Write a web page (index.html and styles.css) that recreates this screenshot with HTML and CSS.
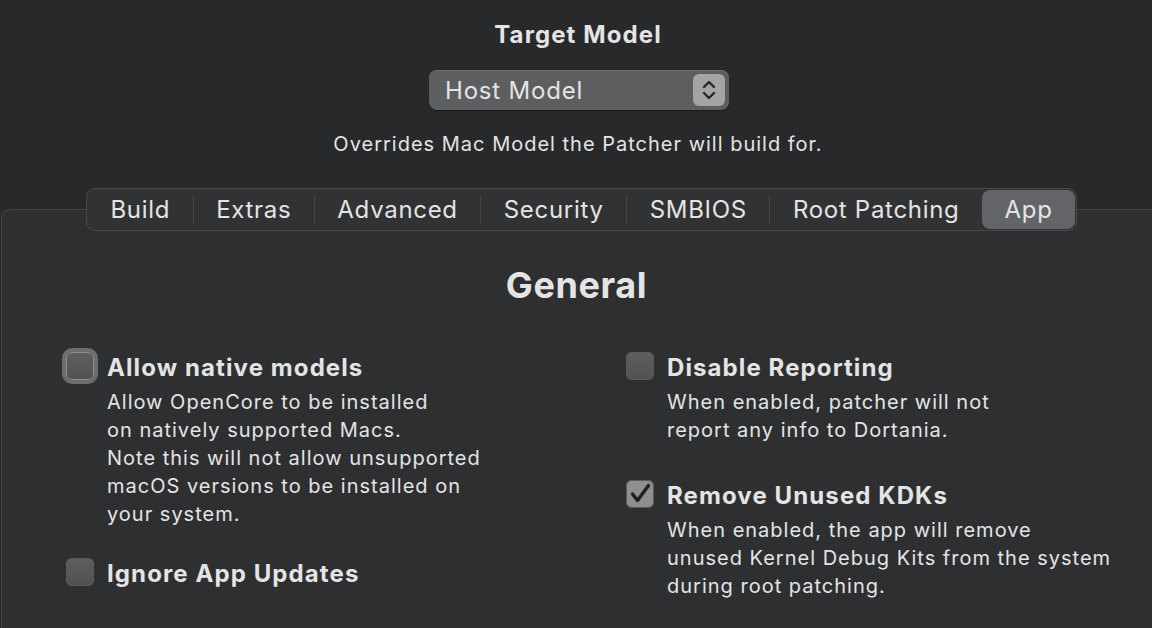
FILE: index.html
```html
<!DOCTYPE html>
<html lang="en">
<head>
    <meta charset="UTF-8">
    <meta name="viewport" content="width=device-width, initial-scale=1.0">
    <title>OpenCore Legacy Patcher Settings</title>
    <link rel="stylesheet" href="styles.css">
</head>
<body>
    <div class="header">
        <h1>Target Model</h1>
        <div class="popup">
            <span>Host Model</span>
            <span class="stepper">
                <svg width="16" height="24" viewBox="0 0 16 24">
                    <path d="M3 9 L8 4 L13 9" fill="none" stroke="#262626" stroke-width="2.4" stroke-linecap="round" stroke-linejoin="round"/>
                    <path d="M3 15 L8 20 L13 15" fill="none" stroke="#262626" stroke-width="2.4" stroke-linecap="round" stroke-linejoin="round"/>
                </svg>
            </span>
        </div>
        <p class="hint">Overrides Mac Model the Patcher will build for.</p>
    </div>

    <div class="panel">
        <div class="tabs">
            <span class="tab">Build</span>
            <span class="tab">Extras</span>
            <span class="tab">Advanced</span>
            <span class="tab">Security</span>
            <span class="tab">SMBIOS</span>
            <span class="tab">Root Patching</span>
            <span class="tab active">App</span>
        </div>

        <h2>General</h2>

        <div class="columns">
            <div class="col col-left">
                <div class="option">
                    <span class="box focused"></span>
                    <div>
                        <div class="label">Allow native models</div>
                        <p class="desc">Allow OpenCore to be installed<br>on natively supported Macs.<br>Note this will not allow unsupported<br>macOS versions to be installed on<br>your system.</p>
                    </div>
                </div>
                <div class="option">
                    <span class="box"></span>
                    <div>
                        <div class="label">Ignore App Updates</div>
                    </div>
                </div>
            </div>
            <div class="col col-right">
                <div class="option">
                    <span class="box"></span>
                    <div>
                        <div class="label">Disable Reporting</div>
                        <p class="desc">When enabled, patcher will not<br>report any info to Dortania.</p>
                    </div>
                </div>
                <div class="option">
                    <span class="box checked">
                        <svg width="28" height="28" viewBox="0 0 28 28">
                            <path d="M6.5 14 L11.5 20.5 L22.5 5.5" fill="none" stroke="#1f1f20" stroke-width="3.4" stroke-linecap="round" stroke-linejoin="round"/>
                        </svg>
                    </span>
                    <div>
                        <div class="label">Remove Unused KDKs</div>
                        <p class="desc">When enabled, the app will remove<br>unused Kernel Debug Kits from the system<br>during root patching.</p>
                    </div>
                </div>
            </div>
        </div>
    </div>
</body>
</html>
```

FILE: styles.css
```css
body {
    margin: 0;
    height: 628px;
    display: flex;
    flex-direction: column;
    background-color: #28292b;
    color: #e4e4e5;
    font-family: Inter, "Noto Sans", sans-serif;
    overflow: hidden;
}

.header {
    display: flex;
    flex-direction: column;
    align-items: center;
    padding-top: 19px;
    padding-left: 4px;
}

h1 {
    margin: 0;
    font-size: 24px;
    line-height: 32px;
    font-weight: 700;
    letter-spacing: 1.1px;
}

.popup {
    margin-top: 19px;
    margin-left: 2px;
    width: 300px;
    height: 40px;
    box-sizing: border-box;
    display: flex;
    align-items: center;
    justify-content: space-between;
    padding: 0 4px 0 16px;
    background: #5d5e60;
    border-radius: 8px;
    box-shadow: inset 0 1px 0 #6a6b6d, 0 1px 1px rgba(0, 0, 0, 0.4);
    font-size: 24px;
    letter-spacing: 0.8px;
}

.stepper {
    width: 32px;
    height: 32px;
    border-radius: 6px;
    background: #a3a4a6;
    display: flex;
    align-items: center;
    justify-content: center;
}

.hint {
    margin: 20px 0 0;
    font-size: 20px;
    line-height: 28px;
    letter-spacing: 1px;
}

.panel {
    flex: 1;
    margin: 51px -10px 0 1px;
    border: 1px solid #424346;
    border-bottom: none;
    border-radius: 9px 9px 0 0;
    background: #2e2f31;
    display: flex;
    flex-direction: column;
    align-items: center;
}

.tabs {
    margin-top: -22px;
    height: 43px;
    box-sizing: border-box;
    display: flex;
    align-items: center;
    padding: 0 1px;
    background: #313234;
    border: 1px solid #48494b;
    border-radius: 9px;
    font-size: 24px;
    letter-spacing: 0.7px;
}

.tab {
    padding: 0 22.5px;
    line-height: 28px;
    border-left: 1px solid #444547;
}

.tab:first-child,
.tab.active {
    border-left: none;
}

.tab.active {
    background: #636467;
    border-radius: 8px;
    line-height: 39px;
}

h2 {
    margin: 32px 0 0 -10px;
    font-size: 36px;
    line-height: 44px;
    font-weight: 700;
    letter-spacing: 0.6px;
}

.columns {
    align-self: stretch;
    display: flex;
    margin-top: 45px;
    padding-left: 64px;
}

.col {
    display: flex;
    flex-direction: column;
}

.col-left {
    width: 560px;
    gap: 30px;
}

.col-right {
    gap: 36px;
}

.option {
    display: flex;
    gap: 13px;
}

.box {
    width: 28px;
    height: 28px;
    flex: none;
    box-sizing: border-box;
    border-radius: 6px;
    background: linear-gradient(#5e5f61, #505153);
    box-shadow: inset 0 0 0 1px #5a5b5d;
    display: flex;
    align-items: center;
    justify-content: center;
}

.box.focused {
    border: 1px solid #8d8e90;
    box-shadow: 0 0 0 4px #6c6d70;
}

.box.checked {
    background: #8e8f91;
}

.label {
    font-size: 24px;
    line-height: 32px;
    font-weight: 700;
    letter-spacing: 1.1px;
}

.desc {
    margin: 4px 0 0;
    font-size: 20px;
    line-height: 28px;
    letter-spacing: 1px;
}
```
